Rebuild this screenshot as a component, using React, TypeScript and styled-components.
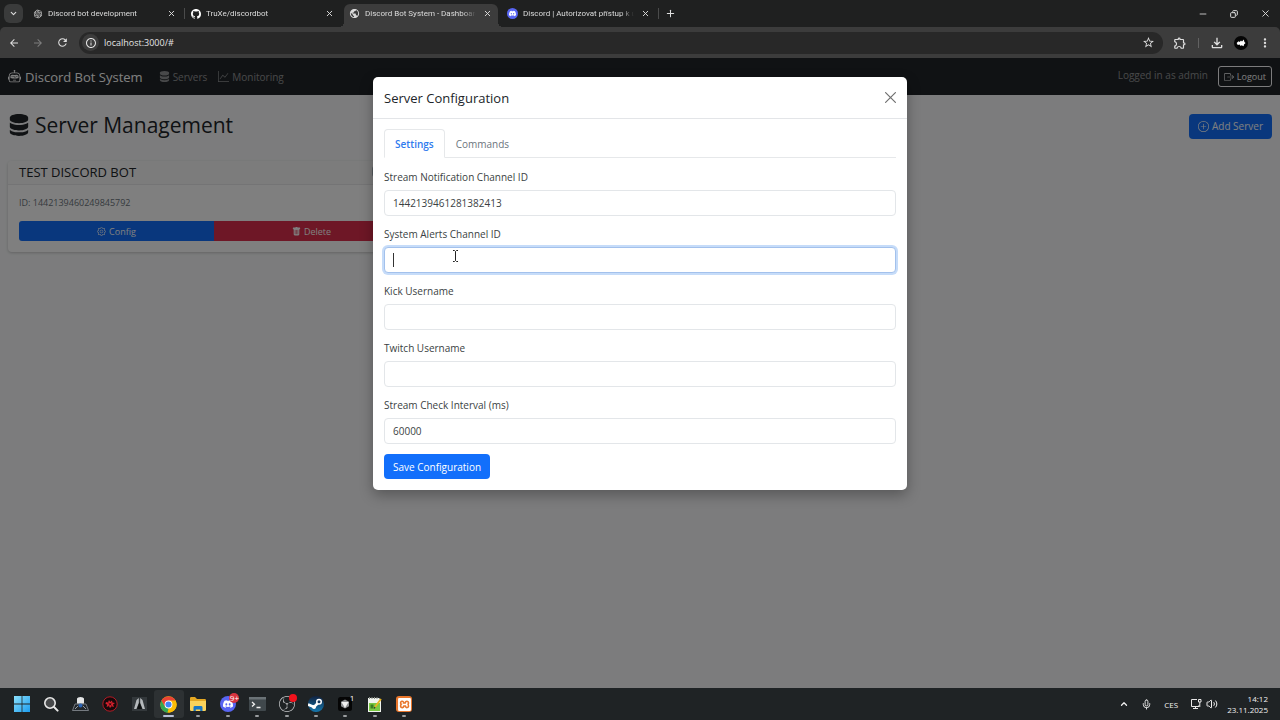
import React from "react";
import styled, { createGlobalStyle, css } from "styled-components";
import {
  BsRobot, BsServer, BsGraphUp, BsBoxArrowRight, BsPlusCircle, BsGear, BsTrashFill,
  BsGithub, BsDiscord,
} from "react-icons/bs";
import {
  MdOutlineExtension, MdStarBorder, MdOutlineFileDownload, MdPublic, MdRefresh, MdArrowBack, MdArrowForward,
  MdInfoOutline, MdMoreVert,
} from "react-icons/md";
import { RiOpenaiFill } from "react-icons/ri";
import { SiXampp, SiObsstudio } from "react-icons/si";
import { ChevronDown, ChevronUp, X, Plus, Minus, Copy, Mic, Volume2 } from "lucide-react";

const Global = createGlobalStyle`
  *, *::before, *::after { box-sizing: border-box; }
  body { margin: 0; background: #f8f9fa; font-family: "Open Sans", "Noto Sans", sans-serif; }
  button, input { font-family: inherit; margin: 0; }
  svg { display: block; flex: none; }
`;

const Screen = styled.div`
  min-height: 100vh;
  display: flex;
  flex-direction: column;
`;

/* Browser chrome */
const TabStrip = styled.div`
  display: flex;
  align-items: center;
  height: 27px;
  background: #1f2020;
  color: #dcdcdc;
`;
const TabSearch = styled.button`
  width: 19px;
  height: 19px;
  margin: 0 5px 0 4px;
  padding: 0;
  border: 0;
  border-radius: 6px;
  background: #3a3b3b;
  color: inherit;
  display: grid;
  place-items: center;
`;
const Tab = styled.div<{ $active?: boolean; $divided?: boolean }>`
  position: relative;
  width: 154px;
  height: 19px;
  margin-right: 4px;
  padding: 0 5px;
  display: flex;
  align-items: center;
  gap: 5px;
  font-family: Roboto, "Open Sans", sans-serif;
  font-size: 8px;
  line-height: 12px;
  ${(p) => p.$active && css`
    height: 23px;
    align-self: flex-end;
    padding-bottom: 4px;
    background: #3c3c3c;
    border-radius: 6px 6px 0 0;
    &::before, &::after {
      content: "";
      position: absolute;
      bottom: 0;
      width: 5px;
      height: 5px;
    }
    &::before { left: -5px; background: radial-gradient(circle at 0 0, transparent 5px, #3c3c3c 5px); }
    &::after { right: -5px; background: radial-gradient(circle at 100% 0, transparent 5px, #3c3c3c 5px); }
  `}
  ${(p) => p.$divided && css`
    &::after {
      content: "";
      position: absolute;
      right: -3px;
      width: 1px;
      height: 11px;
      background: #4a4b4b;
    }
  `}
`;
const TabTitle = styled.span`
  flex: 1;
  overflow: hidden;
  white-space: nowrap;
  mask-image: linear-gradient(90deg, #000 88%, transparent);
`;
const IconButton = styled.button<{ $dim?: boolean; $size?: number }>`
  width: ${(p) => p.$size ?? 12}px;
  height: ${(p) => p.$size ?? 12}px;
  padding: 0;
  border: 0;
  border-radius: 50%;
  background: none;
  color: ${(p) => (p.$dim ? "#7d7d7d" : "#dedede")};
  display: grid;
  place-items: center;
  place-content: center;
`;
const DiscordDot = styled.span<{ $size: number }>`
  width: ${(p) => p.$size}px;
  height: ${(p) => p.$size}px;
  border-radius: 50%;
  background: #5865f2;
  color: #fff;
  display: grid;
  place-items: center;
`;
const WindowControls = styled.div`
  margin-left: auto;
  display: flex;
  gap: 15px;
  padding-right: 7px;
`;
const Toolbar = styled.div`
  display: flex;
  align-items: center;
  gap: 8px;
  height: 31px;
  padding: 0 9px 0 6px;
  background: #3c3c3c;
  border-radius: 5px 5px 0 0;
`;
const ToolbarBack = styled.div`
  background: #1f2020;
`;
const Address = styled.div`
  flex: 1;
  display: flex;
  align-items: center;
  gap: 5px;
  height: 22px;
  margin-left: 1px;
  padding: 0 9px 0 3px;
  border-radius: 11px;
  background: #282828;
`;
const SiteInfo = styled.button`
  width: 17px;
  height: 17px;
  padding: 0;
  border: 0;
  border-radius: 50%;
  background: #3c3c3c;
  color: #e4e4e4;
  display: grid;
  place-items: center;
`;
const AddressInput = styled.input`
  flex: 1;
  min-width: 0;
  padding: 0;
  border: 0;
  outline: 0;
  background: none;
  color: #e4e4e4;
  font-size: 9px;
  line-height: 14px;
`;
const Extensions = styled.div`
  display: flex;
  align-items: center;
  gap: 12px;
  padding-left: 3px;
`;
const Divider = styled.span`
  width: 1px;
  height: 10px;
  background: #626262;
`;

/* Dashboard */
const Viewport = styled.div`
  position: relative;
  flex: 1;
  display: flex;
  flex-direction: column;
`;
const Nav = styled.nav`
  display: flex;
  align-items: center;
  height: 37px;
  padding: 0 8px;
  background: #212529;
`;
const Brand = styled.a`
  display: flex;
  align-items: center;
  gap: 4px;
  margin-right: 16px;
  color: #fff;
  font-size: 13px;
  line-height: 20px;
  font-weight: 500;
  text-decoration: none;
`;
const NavLink = styled.a`
  display: flex;
  align-items: center;
  gap: 3px;
  margin-right: 11px;
  color: rgba(255, 255, 255, 0.5);
  font-size: 10px;
  line-height: 16px;
  text-decoration: none;
`;
const LoggedIn = styled.span`
  margin: 0 10px 3px auto;
  color: rgba(255, 255, 255, 0.5);
  font-size: 10px;
  line-height: 16px;
`;
const Logout = styled.button`
  display: flex;
  align-items: center;
  gap: 3px;
  height: 21px;
  padding: 0 5px;
  border: 1px solid #f8f9fa;
  border-radius: 3px;
  background: none;
  color: #f8f9fa;
  font-size: 9px;
`;
const Content = styled.main`
  padding: 16px 8px;
`;
const Heading = styled.div`
  display: flex;
  align-items: center;
  justify-content: space-between;
  margin-bottom: 20px;
`;
const Title = styled.h1`
  display: flex;
  align-items: center;
  gap: 5px;
  margin: 0;
  color: #212529;
  font-size: 21px;
  line-height: 28px;
  padding-bottom: 2px;
  font-weight: 500;
`;
const PrimaryButton = styled.button`
  display: flex;
  align-items: center;
  gap: 3px;
  height: 25px;
  padding: 0 9px;
  border: 0;
  border-radius: 4px;
  background: #126ffb;
  color: #fff;
  font-size: 10px;
  line-height: 16px;
`;
const CardGrid = styled.div`
  display: grid;
  grid-template-columns: repeat(3, 1fr);
  gap: 14px;
`;
const Card = styled.article`
  border-radius: 4px;
  background: #fff;
  box-shadow: 0 1px 3px rgba(0, 0, 0, 0.2);
`;
const CardHeader = styled.header`
  display: flex;
  align-items: center;
  justify-content: space-between;
  height: 24px;
  padding: 0 11px 2px;
  border-bottom: 1px solid #e9e9ea;
  border-radius: 4px 4px 0 0;
  background: #f8f8f8;
`;
const CardTitle = styled.h2`
  margin: 0;
  color: #212529;
  font-size: 13px;
  line-height: 18px;
  font-weight: 500;
`;
const Badge = styled.span`
  width: 37px;
  height: 11px;
  border-radius: 3px;
  background: #adb5bd;
`;
const CardBody = styled.div`
  padding: 11px;
`;
const ServerId = styled.p`
  margin: 0 0 11px;
  color: #6c757d;
  font-size: 9px;
  line-height: 14px;
`;
const ButtonGroup = styled.div`
  display: flex;
  border-radius: 3px;
  overflow: hidden;
`;
const CardButton = styled.button<{ $danger?: boolean }>`
  flex: 1;
  display: flex;
  align-items: center;
  justify-content: center;
  gap: 3px;
  height: 20px;
  padding: 0;
  border: 0;
  background: ${(p) => (p.$danger ? "#dc2f4c" : "#126ffb")};
  color: #fff;
  font-size: 9px;
`;

/* Modal */
const Backdrop = styled.div`
  position: absolute;
  inset: 0;
  display: flex;
  justify-content: center;
  align-items: flex-start;
  padding-top: 19px;
  background: rgba(0, 0, 0, 0.5);
`;
const Dialog = styled.section`
  width: 100%;
  max-width: 534px;
  border-radius: 5px;
  background: #fff;
  color: #212529;
  box-shadow: 0 5px 14px rgba(0, 0, 0, 0.3);
`;
const DialogHeader = styled.header`
  display: flex;
  align-items: center;
  justify-content: space-between;
  height: 42px;
  padding: 0 11px;
  border-bottom: 1px solid #e3e5e8;
`;
const DialogTitle = styled.h2`
  margin: 0;
  font-size: 13px;
  line-height: 20px;
  font-weight: 500;
`;
const CloseButton = styled.button`
  width: 11px;
  height: 11px;
  padding: 0;
  border: 0;
  background: none;
  color: #707070;
  display: grid;
  place-items: center;
`;
const DialogBody = styled.form`
  padding: 10px 11px 11px;
`;
const Tabs = styled.div`
  display: flex;
  margin-bottom: 11px;
  border-bottom: 1px solid #e6e8ea;
`;
const TabButton = styled.button<{ $active?: boolean }>`
  height: 29px;
  margin-bottom: -1px;
  padding: 0 10px;
  border: 1px solid transparent;
  border-radius: 4px 4px 0 0;
  background: none;
  color: #6c757d;
  font-size: 10px;
  line-height: 16px;
  ${(p) => p.$active && css`
    border-color: #e6e8ea #e6e8ea #fff;
    background: #fff;
    color: #2f7bee;
    font-weight: 600;
  `}
`;
const Field = styled.div`
  position: relative;
  display: flex;
  flex-direction: column;
  gap: 5px;
  margin-bottom: 10px;
`;
const Label = styled.label`
  color: #3b3f43;
  font-size: 10px;
  line-height: 16px;
`;
const TextInput = styled.input<{ $focused?: boolean }>`
  height: 26px;
  padding: 0 8px;
  border: 1px solid #e3e6e9;
  border-radius: 4px;
  outline: 0;
  background: #fff;
  color: #3b3f43;
  font-size: 10px;
  line-height: 16px;
  ${(p) => p.$focused && css`
    border-color: #a3c1ec;
    box-shadow: 0 0 0 2px #c6dcf9;
  `}
`;
const Caret = styled.span`
  position: absolute;
  left: 9px;
  bottom: 6px;
  width: 1px;
  height: 14px;
  background: #333;
`;
const Pointer = styled.svg`
  position: absolute;
  left: 68px;
  bottom: 11px;
`;

/* Taskbar */
const TaskBar = styled.footer`
  display: flex;
  align-items: center;
  justify-content: space-between;
  height: 32px;
  padding: 0 12px 0 7px;
  background: #1f2325;
  color: #f0f0f0;
`;
const Apps = styled.div`
  display: grid;
  grid-template-columns: repeat(14, 1fr);
  width: 412px;
`;
const AppButton = styled.button<{ $running?: boolean; $active?: boolean }>`
  position: relative;
  height: 28px;
  padding: 0;
  border: 0;
  border-radius: 3px;
  background: ${(p) => (p.$active ? "#2d3133" : "none")};
  color: #f0f0f0;
  display: grid;
  place-items: center;
  &::after {
    content: "";
    position: absolute;
    bottom: 1px;
    width: ${(p) => (p.$active ? 11 : 4)}px;
    height: 2px;
    border-radius: 1px;
    background: ${(p) => (p.$active ? "#b9bfd6" : p.$running ? "#9a9d9f" : "transparent")};
  }
`;
const Count = styled.span<{ $plain?: boolean }>`
  position: absolute;
  top: 3px;
  right: 3px;
  min-width: 10px;
  height: 10px;
  border-radius: 5px;
  background: ${(p) => (p.$plain ? "none" : "#d8343f")};
  color: #fff;
  font-size: 8px;
  line-height: 10px;
`;
const Tray = styled.div`
  display: flex;
  align-items: center;
  font-size: 8px;
  line-height: 11px;
`;
const TrayItem = styled.span<{ $gap: number }>`
  margin-right: ${(p) => p.$gap}px;
`;
const Clock = styled.time`
  text-align: right;
`;

const WindowsLogo = () => (
  <svg width="16" height="16" viewBox="0 0 16 16">
    <defs>
      <linearGradient id="win" x1="0" y1="0" x2="1" y2="1">
        <stop offset="0" stopColor="#8be0fb" /><stop offset="1" stopColor="#1c9df0" />
      </linearGradient>
    </defs>
    <path fill="url(#win)" d="M0 0h7.6v7.6H0zM8.4 0H16v7.6H8.4zM0 8.4h7.6V16H0zM8.4 8.4H16V16H8.4z" />
  </svg>
);
const SearchLogo = () => (
  <svg width="16" height="16" viewBox="0 0 16 16" fill="#47494b" stroke="#e8e8e8" strokeWidth="1.6" strokeLinecap="round">
    <circle cx="7" cy="7" r="5.2" /><path d="M11 11l3.6 3.6" strokeWidth="2" />
  </svg>
);
const LampLogo = () => (
  <svg width="17" height="16" viewBox="0 0 17 16">
    <path d="M3 8h11l2.5 6.5H.5z" fill="#23282d" stroke="#8b9197" strokeWidth=".8" />
    <path d="M5 2.500Q5.400 1 8.500 1t3.500 1.500L12 7.500H5z" fill="#e4e5e6" />
    <circle cx="8.5" cy="9.6" r="2" fill="#2c64b4" />
    <path d="M3 13l3-3M14 13l-3-3" stroke="#b2b6ba" strokeWidth=".8" />
  </svg>
);
const RedLogo = () => (
  <svg width="16" height="16" viewBox="0 0 16 16">
    <circle cx="8" cy="8" r="7.2" fill="#17090b" stroke="#b41b25" strokeWidth="1" />
    <path d="M4 6l2 .5L7 4l1.2 2L10 4.4l.4 2L13 7l-2 1.6 1 2.4-2.4-.8L8 12l-1-2-2.4 1 .6-2.4L3.5 8z" fill="#d3202c" />
    <path d="M6.5 7l3 2.4M9.4 6.8L7 9.6" stroke="#17090b" strokeWidth=".8" />
  </svg>
);
const PeakLogo = () => (
  <svg width="15" height="16" viewBox="0 0 15 16">
    <path fill="#33383b" d="M0 1h15v14H0z" />
    <path fill="#b6babd" d="M6.800 2L4.500 4 2 13h2.400L6.800 7zM8.200 2l2.300 2L13 13h-2.400L8.200 7z" />
    <path fill="#0e1011" d="M7.5 6L10 13H5z" />
  </svg>
);
const ChromeLogo = () => (
  <svg width="17" height="17" viewBox="0 0 48 48">
    <circle cx="24" cy="24" r="23" fill="#fbbc05" />
    <path fill="#34a853" d="M4.1 12.500L14 29.500 24 36l-3 11A23 23 0 0 1 4.1 12.500z" />
    <path fill="#fbbc05" d="M43.9 12.500H24L34 29.500 24 47A23 23 0 0 0 43.900 12.500z" />
    <path fill="#ea4335" d="M4.1 12.500L14 29.500 24 13h19.900A23 23 0 0 0 4.1 12.500z" />
    <circle cx="24" cy="24" r="11" fill="#fff" /><circle cx="24" cy="24" r="8.600" fill="#4285f4" />
  </svg>
);
const FolderLogo = () => (
  <svg width="18" height="16" viewBox="0 0 18 16">
    <path fill="#e5a823" d="M1 2.2Q1 1 2.2 1H6l2 2h7.8Q17 3 17 4.2V8H1z" />
    <path fill="#fbd35b" d="M1 5h16v8.8Q17 15 15.8 15H2.2Q1 15 1 13.8z" />
    <path fill="#1977c4" d="M4.500 15v-3.600Q4.500 10 6 10h6q1.500 0 1.500 1.400V15h-2.300v-1.500H6.800V15z" />
  </svg>
);
const TerminalLogo = () => (
  <svg width="17" height="14" viewBox="0 0 17 14">
    <rect width="17" height="14" rx="1" fill="#40484c" /><path fill="#6b7377" d="M0 0h17v2.500H0z" />
    <path d="M3 5l2.500 2.200L3 9.500M7.500 10.500h4" fill="none" stroke="#f1f1f1" strokeWidth="1.300" />
  </svg>
);
const CubeLogo = () => (
  <svg width="14" height="14" viewBox="0 0 14 14">
    <rect width="14" height="14" rx="2.500" fill="#050505" />
    <path fill="#8d8f91" d="M7 2.500L11 4.700v4.600L7 11.500 3 9.300V4.700z" />
    <path fill="#f1f1f1" d="M3.400 5h7.200L7 11z" />
  </svg>
);
const NotepadLogo = () => (
  <svg width="15" height="17" viewBox="0 0 15 17">
    <path fill="#f0f4ee" d="M1 2h11l2 2v12H1z" /><path fill="#7ac943" d="M2 7h11v8H2z" />
    <path fill="#3b7d21" d="M3.500 8.500h3v4h-3z" />
    <path stroke="#8a8f88" d="M2.500 1v2M5 1v2M7.500 1v2M10 1v2" />
    <path stroke="#e6b422" strokeWidth="1.800" d="M14 3L8 11" />
    <path stroke="#333" strokeWidth="1.200" d="M8 11l-.8 1.500" />
  </svg>
);
const XamppTile = styled.span`
  width: 16px;
  height: 16px;
  border-radius: 3px;
  background: #e8762c;
  color: #fff;
  display: grid;
  place-items: center;
`;
const RecordDot = styled.span`
  position: absolute;
  top: 4px;
  right: 4px;
  width: 8px;
  height: 8px;
  border-radius: 50%;
  background: #f3121c;
`;
const SteamDisc = styled.span`
  width: 16px;
  height: 16px;
  border-radius: 50%;
  background: linear-gradient(#112240, #1577ad);
  display: grid;
  place-items: center;
`;
/* The white valve and arm over the blue disc */
const SteamMark = () => (
  <svg width="16" height="16" viewBox="0 0 16 16">
    <path d="M0 8.500L6 11l4.500-4.500" fill="none" stroke="#fff" strokeWidth="2.600" />
    <circle cx="11" cy="5.800" r="3" fill="#fff" /><circle cx="11" cy="5.800" r="1.500" fill="#16395d" />
    <circle cx="6" cy="11" r="2" fill="#fff" />
  </svg>
);
const Avatar = () => (
  <svg width="14" height="14" viewBox="0 0 14 14">
    <circle cx="7" cy="7" r="7" fill="#050505" />
    <path fill="#fff" d="M2.600 7l2-1.800 1 .8 1.400-1.600 1 1 1.800-2 .6 2.600L11.600 7l-1.600 1.400-.4 1.800-2-1-1 .8-1-1.400-1.800.4z" />
  </svg>
);
const NetworkIcon = () => (
  <svg width="12" height="12" viewBox="0 0 12 12" fill="none" stroke="#e8e8e8">
    <path d="M7 1.500H1.500v7H9V7M3 10.500h5M5.500 8.500v2" /><path d="M8.500 1.500h2.500v2.500H8.500zM9.800 4v5" />
  </svg>
);

const fields = [
  { id: "stream-channel", label: "Stream Notification Channel ID", value: "1442139461281382413" },
  { id: "alerts-channel", label: "System Alerts Channel ID", value: "", focused: true },
  { id: "kick", label: "Kick Username", value: "" },
  { id: "twitch", label: "Twitch Username", value: "" },
  { id: "interval", label: "Stream Check Interval (ms)", value: "60000" },
];

const CloseTab = () => (
  <IconButton aria-label="Close tab"><X size={9} strokeWidth={2.5} /></IconButton>
);

export default function App() {
  return (
    <Screen>
      <Global />
      <TabStrip>
        <TabSearch aria-label="Search tabs"><ChevronDown size={9} strokeWidth={3} /></TabSearch>
        <Tab $divided><RiOpenaiFill size={10} /><TabTitle>Discord bot development</TabTitle><CloseTab /></Tab>
        <Tab><BsGithub size={10} color="#fff" /><TabTitle>TruXe/discordbot</TabTitle><CloseTab /></Tab>
        <Tab $active><MdPublic size={11} /><TabTitle>Discord Bot System - Dashboard</TabTitle><CloseTab /></Tab>
        <Tab $divided>
          <DiscordDot $size={11}><BsDiscord size={7} /></DiscordDot>
          <TabTitle>Discord | Autorizovat přístup k účtu</TabTitle><CloseTab />
        </Tab>
        <IconButton aria-label="New tab" $size={20}><Plus size={11} strokeWidth={2.2} /></IconButton>
        <WindowControls>
          <IconButton aria-label="Minimize" $size={16}><Minus size={10} /></IconButton>
          <IconButton aria-label="Restore" $size={16}><Copy size={8} strokeWidth={3} transform="scale(-1 1)" /></IconButton>
          <IconButton aria-label="Close window" $size={16}><X size={11} /></IconButton>
        </WindowControls>
      </TabStrip>
      <ToolbarBack>
        <Toolbar>
          <IconButton aria-label="Back" $size={16}><MdArrowBack size={12} /></IconButton>
          <IconButton aria-label="Forward" $size={16} $dim><MdArrowForward size={12} /></IconButton>
          <IconButton aria-label="Reload" $size={16}><MdRefresh size={13} /></IconButton>
          <Address>
            <SiteInfo aria-label="Site information"><MdInfoOutline size={12} /></SiteInfo>
            <AddressInput aria-label="Address" defaultValue="localhost:3000/#" />
            <IconButton aria-label="Bookmark"><MdStarBorder size={13} /></IconButton>
          </Address>
          <Extensions>
            <IconButton aria-label="Extensions"><MdOutlineExtension size={14} /></IconButton>
            <Divider />
            <IconButton aria-label="Downloads"><MdOutlineFileDownload size={16} /></IconButton>
            <IconButton aria-label="Profile"><Avatar /></IconButton>
            <IconButton aria-label="Menu"><MdMoreVert size={14} /></IconButton>
          </Extensions>
        </Toolbar>
      </ToolbarBack>

      <Viewport>
        <Nav>
          <Brand href="#"><BsRobot size={13} />Discord Bot System</Brand>
          <NavLink href="#"><BsServer size={11} />Servers</NavLink>
          <NavLink href="#"><BsGraphUp size={11} />Monitoring</NavLink>
          <LoggedIn>Logged in as admin</LoggedIn>
          <Logout><BsBoxArrowRight size={10} />Logout</Logout>
        </Nav>
        <Content>
          <Heading>
            <Title><BsServer size={22} />Server Management</Title>
            <PrimaryButton><BsPlusCircle size={11} />Add Server</PrimaryButton>
          </Heading>
          <CardGrid>
            <Card>
              <CardHeader><CardTitle>TEST DISCORD BOT</CardTitle><Badge /></CardHeader>
              <CardBody>
                <ServerId>ID: 1442139460249845792</ServerId>
                <ButtonGroup>
                  <CardButton><BsGear size={9} />Config</CardButton>
                  <CardButton $danger><BsTrashFill size={9} />Delete</CardButton>
                </ButtonGroup>
              </CardBody>
            </Card>
          </CardGrid>
        </Content>

        <Backdrop>
          <Dialog role="dialog" aria-labelledby="dialog-title">
            <DialogHeader>
              <DialogTitle id="dialog-title">Server Configuration</DialogTitle>
              <CloseButton aria-label="Close">
                <svg width="11" height="11" viewBox="0 0 11 11" stroke="currentColor" strokeWidth="1.200" strokeLinecap="round">
                  <path d="M.6.6l9.800 9.800M10.400.6L.6 10.400" />
                </svg>
              </CloseButton>
            </DialogHeader>
            <DialogBody onSubmit={(e) => e.preventDefault()}>
              <Tabs role="tablist">
                <TabButton type="button" role="tab" aria-selected $active>Settings</TabButton>
                <TabButton type="button" role="tab">Commands</TabButton>
              </Tabs>
              {fields.map((f) => (
                <Field key={f.id}>
                  <Label htmlFor={f.id}>{f.label}</Label>
                  <TextInput id={f.id} defaultValue={f.value} $focused={f.focused} />
                  {f.focused && (
                    <>
                      <Caret />
                      <Pointer width="7" height="12" viewBox="0 0 7 12" fill="none" stroke="#222">
                        <path d="M1 .5h1.500l1 1 1-1H6M3.500 1.500v9M1 11.500h1.500l1-1 1 1H6" />
                      </Pointer>
                    </>
                  )}
                </Field>
              ))}
              <PrimaryButton type="submit">Save Configuration</PrimaryButton>
            </DialogBody>
          </Dialog>
        </Backdrop>
      </Viewport>

      <TaskBar>
        <Apps>
          <AppButton aria-label="Start"><WindowsLogo /></AppButton>
          <AppButton aria-label="Search"><SearchLogo /></AppButton>
          <AppButton aria-label="Lamp"><LampLogo /></AppButton>
          <AppButton aria-label="Game"><RedLogo /></AppButton>
          <AppButton aria-label="Peak"><PeakLogo /></AppButton>
          <AppButton aria-label="Chrome" $active><ChromeLogo /></AppButton>
          <AppButton aria-label="Files" $running><FolderLogo /></AppButton>
          <AppButton aria-label="Discord" $running><DiscordDot $size={16}><BsDiscord size={10} /></DiscordDot><Count>9+</Count></AppButton>
          <AppButton aria-label="Terminal" $running><TerminalLogo /></AppButton>
          <AppButton aria-label="OBS Studio" $running><SiObsstudio size={16} color="#c4c6c8" /><RecordDot /></AppButton>
          <AppButton aria-label="Steam" $running><SteamDisc><SteamMark /></SteamDisc></AppButton>
          <AppButton aria-label="Cursor" $running><CubeLogo /><Count $plain>1</Count></AppButton>
          <AppButton aria-label="Notepad++" $running><NotepadLogo /></AppButton>
          <AppButton aria-label="XAMPP" $running><XamppTile><SiXampp size={13} /></XamppTile></AppButton>
        </Apps>
        <Tray>
          <TrayItem $gap={12}><ChevronUp size={10} strokeWidth={3} /></TrayItem>
          <TrayItem $gap={12}><Mic size={11} /></TrayItem>
          <TrayItem $gap={12}>CES</TrayItem>
          <TrayItem $gap={4}><NetworkIcon /></TrayItem>
          <TrayItem $gap={9}><Volume2 size={12} /></TrayItem>
          <Clock>14:12<br />23.11.2025</Clock>
        </Tray>
      </TaskBar>
    </Screen>
  );
}
